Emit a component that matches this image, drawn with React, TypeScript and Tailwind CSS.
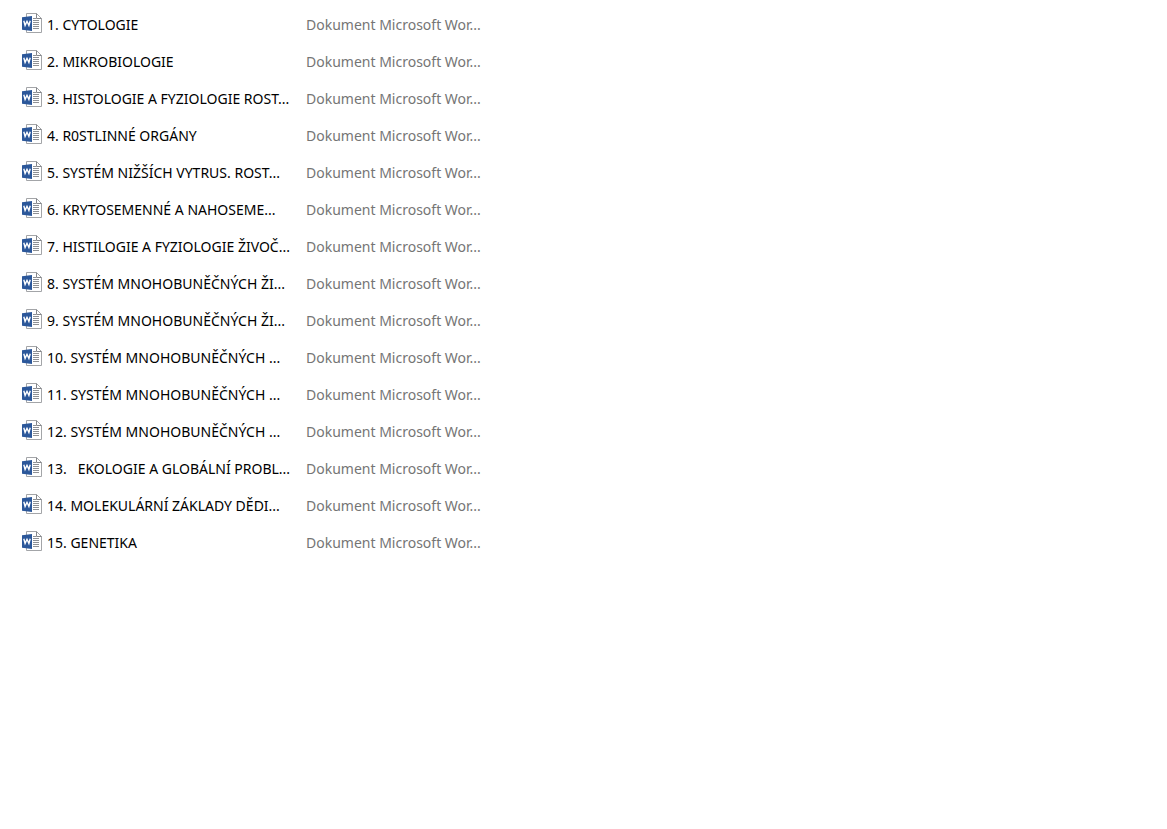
const DOCUMENT_TYPE = 'Dokument Microsoft Wor...';

const files = [
  '1. CYTOLOGIE',
  '2. MIKROBIOLOGIE',
  '3. HISTOLOGIE A FYZIOLOGIE ROST...',
  '4. R0STLINNÉ ORGÁNY',
  '5. SYSTÉM NIŽŠÍCH VYTRUS. ROST...',
  '6. KRYTOSEMENNÉ A NAHOSEME...',
  '7. HISTILOGIE A FYZIOLOGIE ŽIVOČ...',
  '8. SYSTÉM MNOHOBUNĚČNÝCH ŽI...',
  '9. SYSTÉM MNOHOBUNĚČNÝCH ŽI...',
  '10. SYSTÉM MNOHOBUNĚČNÝCH ...',
  '11. SYSTÉM MNOHOBUNĚČNÝCH ...',
  '12. SYSTÉM MNOHOBUNĚČNÝCH ...',
  '13.   EKOLOGIE A GLOBÁLNÍ PROBL...',
  '14. MOLEKULÁRNÍ ZÁKLADY DĚDI...',
  '15. GENETIKA',
];

function WordIcon() {
  return (
    <svg viewBox="0 0 20 20" className="mb-[3px] h-5 w-5 shrink-0" aria-hidden="true">
      <path d="M4.5 .5h10l5 5v14h-15z" fill="#fff" stroke="#a3a5a8" />
      <path d="M14.5 .5v5h5" fill="none" stroke="#85878b" />
      <path d="M11 5.5h3M11 7.5h6M11 9.5h6M11 11.5h6M11 13.5h6M11 15.5h6" stroke="#8f9195" />
      <path d="M0 4.2l10-1.2v15L0 16.8z" fill="#2b579a" />
      <path d="M1.8 7.8l1.3 4.6L5 8.3l1.9 4.1 1.3-4.6" fill="none" stroke="#fff" strokeWidth="1.4" />
    </svg>
  );
}

export default function App() {
  return (
    <main className="min-h-screen bg-white py-1.5 pl-[22px] font-['Noto_Sans','Open_Sans',sans-serif] text-sm">
      <table className="border-collapse text-left">
        <tbody>
          {files.map((name) => (
            <tr key={name} className="h-[37px]">
              <td className="w-[284px] p-0">
                <div className="flex items-center gap-[5px] text-black">
                  <WordIcon />
                  <span className="whitespace-pre">{name}</span>
                </div>
              </td>
              <td className="p-0 whitespace-nowrap text-[#757575]">{DOCUMENT_TYPE}</td>
            </tr>
          ))}
        </tbody>
      </table>
    </main>
  );
}
